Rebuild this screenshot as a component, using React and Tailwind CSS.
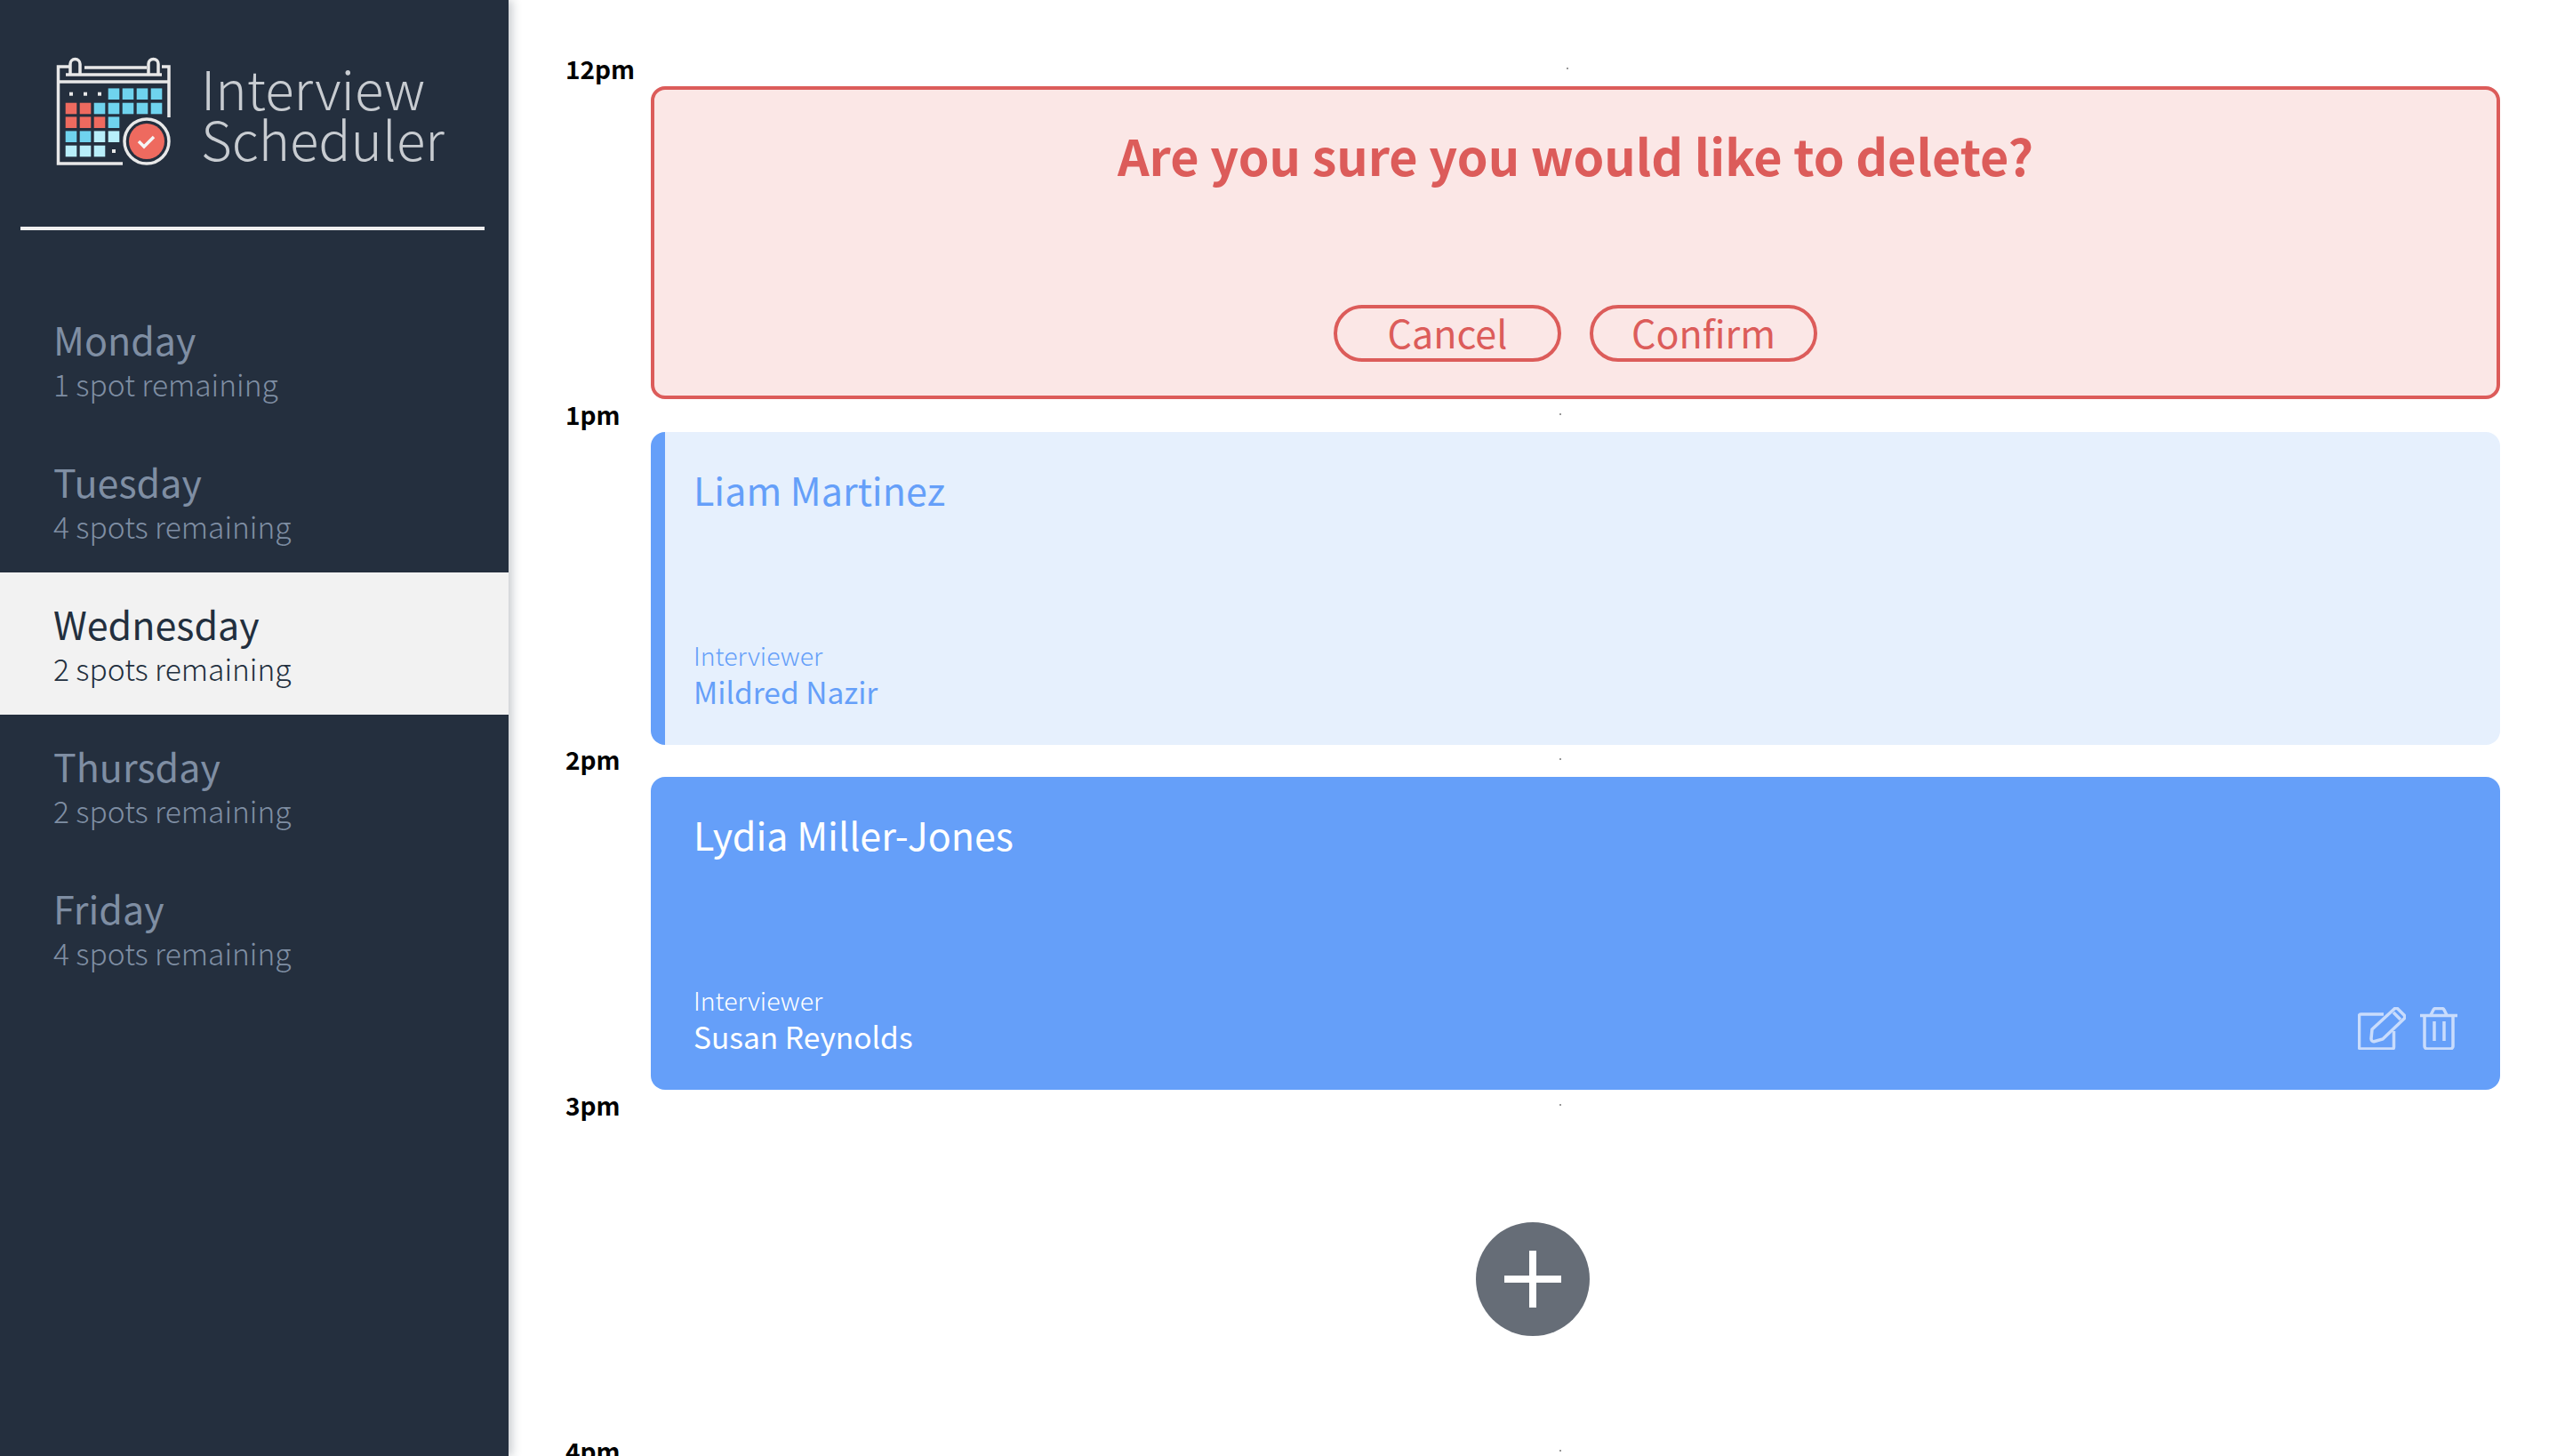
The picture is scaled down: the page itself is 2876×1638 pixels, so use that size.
import React from 'react';

const days = [
  { name: 'Monday', spots: '1 spot remaining' },
  { name: 'Tuesday', spots: '4 spots remaining' },
  { name: 'Wednesday', spots: '2 spots remaining', selected: true },
  { name: 'Thursday', spots: '2 spots remaining' },
  { name: 'Friday', spots: '4 spots remaining' },
];

function Logo() {
  const cols = [40, 56, 72, 88, 104, 120, 136];
  const rows = [57.7, 74, 89.7, 105.7, 122];
  const blue = '#6fd3ee';
  const red = '#ee6a5f';
  const pale = '#b8eefa';
  // [col, row, colour], null colour is a small dot
  const cells = [
    [0, 0, null], [1, 0, null], [2, 0, null], [3, 0, blue], [4, 0, blue], [5, 0, blue], [6, 0, blue],
    [0, 1, red], [1, 1, red], [2, 1, blue], [3, 1, blue], [4, 1, blue], [5, 1, blue], [6, 1, blue],
    [0, 2, red], [1, 2, red], [2, 2, red], [3, 2, blue],
    [0, 3, blue], [1, 3, blue], [2, 3, pale], [3, 3, pale],
    [0, 4, pale], [1, 4, pale], [2, 4, pale], [3, 4, null],
  ];
  return (
    <svg viewBox="0 0 170 150" className="w-[170px] h-[150px] shrink-0">
      <g fill="none" stroke="#e8e8e8" strokeWidth="3.500">
        <path d="M38 27H25.500V136H98" />
        <path d="M55 28H125" />
        <path d="M142 27H150V84" />
        <path d="M25.500 44H150" />
        <path d="M34 36H142" />
        <path d="M39 35V24a5.500 5.500 0 0 1 11 0V35" />
        <path d="M127 35V24a5.500 5.500 0 0 1 11 0V35" />
        <circle cx="125" cy="111" r="25" />
      </g>
      {cells.map(([c, r, color]) =>
        color ? (
          <rect key={`${c}-${r}`} x={cols[c] - 6.300} y={rows[r] - 6.300} width="12.600" height="12.600" fill={color} />
        ) : (
          <rect key={`${c}-${r}`} x={cols[c] - 2} y={rows[r] - 2} width="4" height="4" fill="#e8e8e8" />
        )
      )}
      <circle cx="125" cy="111" r="20" fill={red} />
      <path d="M116 111l6 6 11-11" fill="none" stroke="#f5f5f5" strokeWidth="3.500" />
    </svg>
  );
}

function DayItem({ name, spots, selected }) {
  return (
    <li className={`h-[160px] pl-[60px] pt-[27px] ${selected ? 'bg-[#f2f2f2] text-[#222f3e]' : 'text-[#7f8ea3]'}`}>
      <h2 className="text-[43px] leading-[60px] font-normal">{name}</h2>
      <h3 className="mt-[1px] text-[33.500px] leading-[40px] font-light">{spots}</h3>
    </li>
  );
}

function Sidebar() {
  return (
    <nav className="relative z-10 w-[572px] shrink-0 bg-[#242f3e] shadow-[4px_0_10px_rgba(34,47,62,0.25)]">
      <div className="flex items-center h-[255px] pb-[9px] pl-[40px]">
        <Logo />
        <div className="ml-[16px] pt-[6px] text-[60px] leading-[57px] font-light text-[#c8ccd1]">
          Interview<br />Scheduler
        </div>
      </div>
      <div className="mx-[23px] w-[522px] h-[4px] bg-[#f0f0f0]" />
      <ul className="mt-[65px]">
        {days.map((d) => (
          <DayItem key={d.name} {...d} />
        ))}
      </ul>
    </nav>
  );
}

function SlotHeader({ time }) {
  return (
    <header className="flex items-center h-[40px]">
      <h4 className="text-[28px] leading-[40px] font-bold text-black">{time}</h4>
      <div className="flex-1 flex justify-center">
        <div className="w-[2px] h-[2px] bg-[#999999]" />
      </div>
    </header>
  );
}

function EditIcon() {
  return (
    <svg viewBox="0 0 54 48" className="w-[54px] h-[48px]" fill="none" stroke="currentColor" strokeWidth="3.500">
      <path d="M29 8H3.500a2 2 0 0 0-2 2v35a2 2 0 0 0 2 2h35a2 2 0 0 0 2-2V27" />
      <path d="M16 25L41 2a3 3 0 0 1 4 0l7 7a3 3 0 0 1 0 4L28 36l-9 2.500a3 3 0 0 1-4-3z" />
      <path d="M40 6l8 8" />
    </svg>
  );
}

function TrashIcon() {
  return (
    <svg viewBox="0 0 42 48" className="w-[42px] h-[48px]" fill="none" stroke="currentColor" strokeWidth="3.500">
      <path d="M0 9.500H42" />
      <path d="M5 10V44a3 3 0 0 0 3 3H34a3 3 0 0 0 3-3V10" />
      <path d="M12 9l3-6a3 3 0 0 1 2-1.500H25a3 3 0 0 1 2 1.500l3 6" />
      <path d="M16 16V38" />
      <path d="M27 16V38" />
    </svg>
  );
}

function Appointment({ student, interviewer, hover }) {
  return (
    <div
      className={`relative h-[352px] rounded-2xl pt-[29px] ${
        hover ? 'bg-[#659ff9] text-white pl-[48px]' : 'bg-[#e6f0fd] text-[#659ff9] border-l-[16px] border-[#659ff9] pl-[32px]'
      }`}
    >
      <h2 className="text-[43px] leading-[70px] font-normal">{student}</h2>
      <div className="mt-[132px]">
        <h4 className="text-[28.500px] leading-[40px] font-light">Interviewer</h4>
        <h3 className="text-[33.500px] leading-[41px] font-normal">{interviewer}</h3>
      </div>
      {hover && (
        <div className="absolute right-[48px] bottom-[45px] flex gap-[16px] text-[#c9dcfc]">
          <EditIcon />
          <TrashIcon />
        </div>
      )}
    </div>
  );
}

function Confirm() {
  return (
    <div className="flex flex-col items-center h-[352px] rounded-2xl border-4 border-[#dc5c5a] bg-[#fbe7e6] text-[#dc5c5a]">
      <h1 className="mt-[30px] text-[55.700px] leading-[86px] font-semibold">Are you sure you would like to delete?</h1>
      <div className="flex gap-[32px] mt-[126px]">
        <button className="w-[256px] h-[64px] rounded-full border-4 border-[#dc5c5a] text-[43px] leading-[50px] pb-[4px]">Cancel</button>
        <button className="w-[256px] h-[64px] rounded-full border-4 border-[#dc5c5a] text-[43px] leading-[50px] pb-[4px]">Confirm</button>
      </div>
    </div>
  );
}

function Slot({ time, children }) {
  return (
    <article className="h-[388.700px]">
      <SlotHeader time={time} />
      <div className="ml-[96px]">{children}</div>
    </article>
  );
}

export default function App() {
  return (
    <div className="flex w-screen h-screen overflow-hidden bg-white font-['Noto_Sans_CJK_SC',sans-serif]">
      <Sidebar />
      <main className="flex-1 min-w-0 pt-[57px] pl-[64px] pr-[64px]">
        <Slot time="12pm"><Confirm /></Slot>
        <Slot time="1pm"><Appointment student="Liam Martinez" interviewer="Mildred Nazir" /></Slot>
        <Slot time="2pm"><Appointment student="Lydia Miller-Jones" interviewer="Susan Reynolds" hover /></Slot>
        <Slot time="3pm">
          <div className="flex items-center h-[352px] pl-[928px]">
            <div className="flex items-center justify-center w-[128px] h-[128px] rounded-full bg-[#666d77]">
              <svg viewBox="0 0 64 64" className="w-[64px] h-[64px]" fill="#ffffff">
                <rect x="0" y="28" width="64" height="8" />
                <rect x="28" y="0" width="8" height="64" />
              </svg>
            </div>
          </div>
        </Slot>
        <Slot time="4pm" />
      </main>
    </div>
  );
}
